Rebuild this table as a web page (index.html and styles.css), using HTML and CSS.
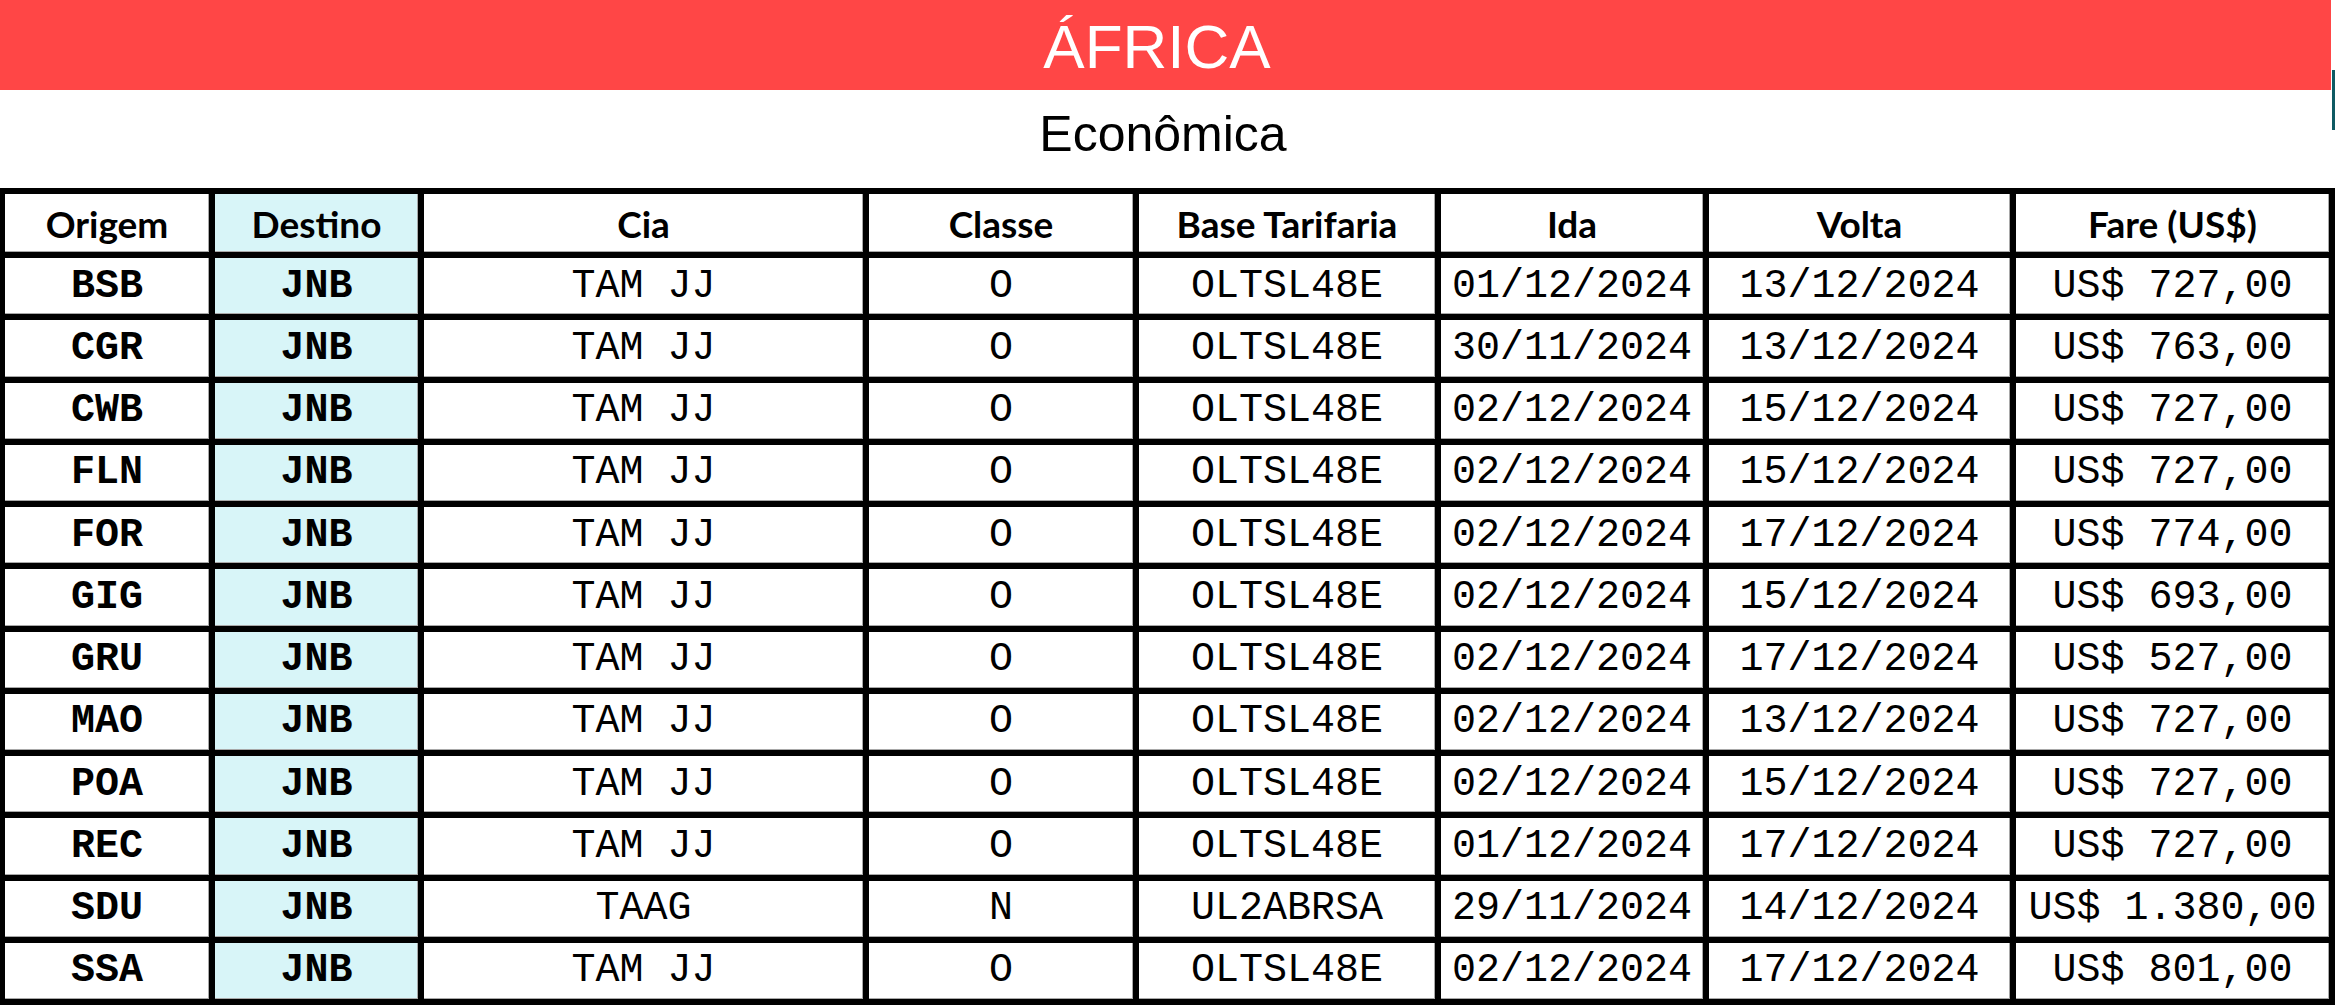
FILE: index.html
```html
<!DOCTYPE html>
<html lang="pt">
<head>
<meta charset="utf-8">
<title>África - Econômica</title>
<link rel="stylesheet" href="styles.css">
</head>
<body>
<div class="page">
  <div class="banner"><span>ÁFRICA</span></div>
  <div class="subtitle"><span>Econômica</span><i class="sel-mark"></i></div>
  <div class="fares">
    <div class="cell head">Origem</div>
    <div class="cell head dest">Destino</div>
    <div class="cell head">Cia</div>
    <div class="cell head">Classe</div>
    <div class="cell head">Base Tarifaria</div>
    <div class="cell head">Ida</div>
    <div class="cell head">Volta</div>
    <div class="cell head">Fare (US$)</div>

    <div class="cell code">BSB</div><div class="cell code dest">JNB</div><div class="cell">TAM JJ</div><div class="cell">O</div><div class="cell">OLTSL48E</div><div class="cell">01/12/2024</div><div class="cell">13/12/2024</div><div class="cell">US$ 727,00</div>
    <div class="cell code">CGR</div><div class="cell code dest">JNB</div><div class="cell">TAM JJ</div><div class="cell">O</div><div class="cell">OLTSL48E</div><div class="cell">30/11/2024</div><div class="cell">13/12/2024</div><div class="cell">US$ 763,00</div>
    <div class="cell code">CWB</div><div class="cell code dest">JNB</div><div class="cell">TAM JJ</div><div class="cell">O</div><div class="cell">OLTSL48E</div><div class="cell">02/12/2024</div><div class="cell">15/12/2024</div><div class="cell">US$ 727,00</div>
    <div class="cell code">FLN</div><div class="cell code dest">JNB</div><div class="cell">TAM JJ</div><div class="cell">O</div><div class="cell">OLTSL48E</div><div class="cell">02/12/2024</div><div class="cell">15/12/2024</div><div class="cell">US$ 727,00</div>
    <div class="cell code">FOR</div><div class="cell code dest">JNB</div><div class="cell">TAM JJ</div><div class="cell">O</div><div class="cell">OLTSL48E</div><div class="cell">02/12/2024</div><div class="cell">17/12/2024</div><div class="cell">US$ 774,00</div>
    <div class="cell code">GIG</div><div class="cell code dest">JNB</div><div class="cell">TAM JJ</div><div class="cell">O</div><div class="cell">OLTSL48E</div><div class="cell">02/12/2024</div><div class="cell">15/12/2024</div><div class="cell">US$ 693,00</div>
    <div class="cell code">GRU</div><div class="cell code dest">JNB</div><div class="cell">TAM JJ</div><div class="cell">O</div><div class="cell">OLTSL48E</div><div class="cell">02/12/2024</div><div class="cell">17/12/2024</div><div class="cell">US$ 527,00</div>
    <div class="cell code">MAO</div><div class="cell code dest">JNB</div><div class="cell">TAM JJ</div><div class="cell">O</div><div class="cell">OLTSL48E</div><div class="cell">02/12/2024</div><div class="cell">13/12/2024</div><div class="cell">US$ 727,00</div>
    <div class="cell code">POA</div><div class="cell code dest">JNB</div><div class="cell">TAM JJ</div><div class="cell">O</div><div class="cell">OLTSL48E</div><div class="cell">02/12/2024</div><div class="cell">15/12/2024</div><div class="cell">US$ 727,00</div>
    <div class="cell code">REC</div><div class="cell code dest">JNB</div><div class="cell">TAM JJ</div><div class="cell">O</div><div class="cell">OLTSL48E</div><div class="cell">01/12/2024</div><div class="cell">17/12/2024</div><div class="cell">US$ 727,00</div>
    <div class="cell code">SDU</div><div class="cell code dest">JNB</div><div class="cell">TAAG</div><div class="cell">N</div><div class="cell">UL2ABRSA</div><div class="cell">29/11/2024</div><div class="cell">14/12/2024</div><div class="cell">US$ 1.380,00</div>
    <div class="cell code">SSA</div><div class="cell code dest">JNB</div><div class="cell">TAM JJ</div><div class="cell">O</div><div class="cell">OLTSL48E</div><div class="cell">02/12/2024</div><div class="cell">17/12/2024</div><div class="cell">US$ 801,00</div>
  </div>
</div>
</body>
</html>
```

FILE: styles.css
```css
html, body {
  margin: 0;
  padding: 0;
  background: #ffffff;
}

.page {
  width: 2336px;
  height: 1005px;
  overflow: hidden;
}

.banner {
  width: 2331px;
  height: 90px;
  background: #ff4646;
  display: flex;
  align-items: center;
  justify-content: center;
  box-sizing: border-box;
  padding-right: 17px;
  color: #ffffff;
  font-family: "Liberation Sans", Arial, sans-serif;
  font-size: 62px;
  line-height: 1;
}

.banner span {
  position: relative;
  top: 2px;
}

.subtitle {
  position: relative;
  height: 98px;
  display: flex;
  align-items: flex-start;
  justify-content: center;
  box-sizing: border-box;
  padding-top: 19px;
  padding-right: 10px;
  color: #000000;
  font-family: "Liberation Sans", Arial, sans-serif;
  font-size: 50px;
  line-height: 50px;
}

.sel-mark {
  position: absolute;
  left: 2332px;
  top: -20px;
  width: 3px;
  height: 60px;
  background: #0f5a63;
}

.fares {
  display: grid;
  width: 2335px;
  box-sizing: border-box;
  grid-template-columns: 210px 209px 445px 270px 302px 268px 307px 319px;
  grid-template-rows: 64px repeat(12, 62.25px);
  border-left: 5px solid #000;
  border-top: 6px solid #000;
}

.cell {
  box-sizing: border-box;
  border-right: 6px solid #000;
  border-bottom: 6px solid #000;
  box-shadow: inset -1px -1px 0 #a8a8a8;
  display: flex;
  align-items: center;
  justify-content: center;
  white-space: nowrap;
  overflow: visible;
  font-family: "Courier New", "Nimbus Mono PS", "Nimbus Mono L", FreeMono, "Courier 10 Pitch", Courier, "Liberation Mono", monospace;
  font-size: 40px;
  color: #000;
  background: #fff;
}

.cell.head {
  font-family: Lato, "Liberation Sans", sans-serif;
  font-weight: 700;
  font-size: 37px;
}

.cell.code {
  font-weight: 700;
}

.cell.dest {
  background: #d8f5f8;
}
```
